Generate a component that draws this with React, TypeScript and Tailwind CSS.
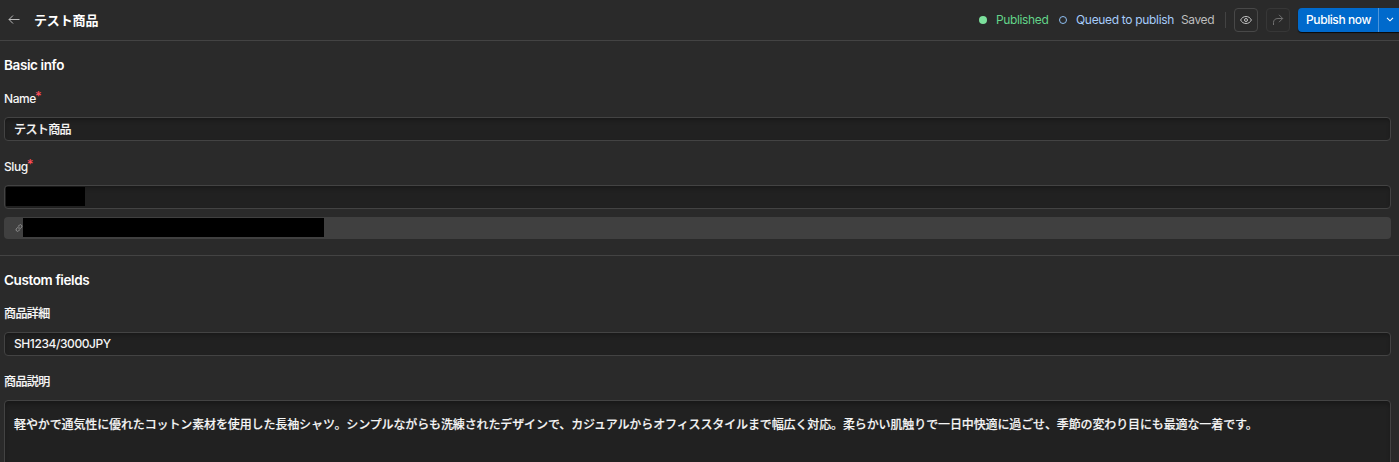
import type { ReactNode } from "react";

function Label({ children, required }: { children: ReactNode; required?: boolean }) {
  return (
    <div className="flex h-4 items-center whitespace-nowrap text-[#f5f5f5]">
      {children}
      {required && <span className="-mt-1.5 -ml-px text-[13px] text-[#ff4d58]">*</span>}
    </div>
  );
}

function Input({ children }: { children?: ReactNode }) {
  return (
    <div className="flex h-6 items-center rounded border border-[#434343] bg-[#212121] px-[9px] text-[#f5f5f5] shadow-[inset_0_3px_4px_-1px_rgba(0,0,0,0.28)]">
      {children}
    </div>
  );
}

function Header() {
  return (
    <header className="flex h-[41px] items-center border-b border-[#434343] pb-px pl-2">
      <svg width="12" height="10" viewBox="0 0 12 10" fill="none" stroke="#bdbdbd">
        <path d="M11.5 4.5H1M5 0.5L1 4.5L5 8.5" />
      </svg>
      <h1 className="ml-3.5 text-[13px] font-bold tracking-[-0.13px] text-white">テスト商品</h1>

      <div className="ml-auto flex items-center font-normal whitespace-nowrap">
        <span className="size-2 rounded-full bg-[#7ce09c]" />
        <span className="ml-[9px] w-[51px] tracking-[-0.36px] text-[#63d489]">Published</span>
        <span className="ml-3 size-2 rounded-full border border-[#8ebff2]" />
        <span className="ml-[9px] w-[97px] tracking-[-0.32px] text-[#a6ccfa]">Queued to publish</span>
        <span className="ml-2 w-[34px] tracking-[-0.4px] text-[#bdbdbd]">Saved</span>
        <span className="ml-[10px] h-4 w-px bg-[#434343]" />
        <button className="ml-2 flex size-6 items-center justify-center rounded border border-[#484848]">
          <svg width="12" height="8" viewBox="0 0 12 8" fill="none" stroke="#c4c4c4">
            <path d="M0.6 4C1.8 1.6 3.7 0.5 6 0.5S10.2 1.6 11.4 4C10.2 6.4 8.3 7.5 6 7.5S1.8 6.4 0.6 4Z" />
            <circle cx="6" cy="4" r="1.5" />
          </svg>
        </button>
        <button className="ml-2 flex size-6 items-center justify-center rounded border border-[#373737]">
          <svg width="12" height="12" viewBox="0 0 12 12" fill="none" stroke="#707070">
            <path d="M7 0.8L10.7 4.5L7 8.2M10.7 4.5H6C3 4.5 1.5 6.2 1.5 8.5V11" />
          </svg>
        </button>
        <div className="ml-2 flex h-6 rounded-l bg-[#006acc] text-white shadow-[0_1px_1px_rgba(0,0,0,0.8)]">
          <button className="w-[81px] border-r border-[#4c95dc] pl-px font-medium tracking-[-0.42px]">Publish now</button>
          <button className="flex w-5 items-center justify-center pl-px">
            <svg width="8" height="5" viewBox="0 0 8 5" fill="none" stroke="currentColor" strokeWidth="1.1">
              <path d="M1 0.8L4 3.8L7 0.8" />
            </svg>
          </button>
        </div>
      </div>
    </header>
  );
}

export default function App() {
  return (
    <div className="h-[462px] overflow-hidden bg-[#2a2a2a] font-['Inter','Noto_Sans_CJK_JP',sans-serif] text-[12px] leading-4 font-medium tracking-[-0.42px]">
      <Header />

      {/* Basic info */}
      <section className="h-[215px] border-b border-[#434343] pt-4 pr-2 pl-1">
        <h2 className="text-[13.5px] leading-4 font-semibold tracking-[-0.38px] text-white">Basic info</h2>
        <div className="mt-[18px]">
          <Label required>Name</Label>
        </div>
        <div className="mt-2.5">
          <Input>
            <span className="pt-px tracking-[-0.6px] [-webkit-text-stroke:0.15px]">テスト商品</span>
          </Input>
        </div>
        <div className="mt-[18px]">
          <Label required>Slug</Label>
        </div>
        <div className="mt-2.5 h-6 rounded border border-[#434343] bg-[#212121] pt-px pl-px shadow-[inset_0_3px_4px_-1px_rgba(0,0,0,0.28)]">
          <div className="h-[19px] w-[79px] bg-black" />
        </div>
        <div className="mt-2 flex h-[22px] items-start rounded bg-[#404040] pt-px pl-[11px]">
          <svg className="mt-1.5" width="8" height="8" viewBox="0 0 8 8" fill="none" stroke="#a0a0a0" strokeWidth="0.8">
            <path d="M3.3 2.2L4.6 0.9C5.7 0 7.7 1.7 6.8 3L5.2 4.7C4.6 5.2 3.8 5.1 3.3 4.6M4.7 5.8L3.4 7.1C2.3 8 0.3 6.3 1.2 5L2.8 3.3C3.4 2.8 4.2 2.9 4.7 3.4" />
          </svg>
          <div className="h-[19px] w-[301px] bg-black" />
        </div>
      </section>

      {/* Custom fields */}
      <section className="pt-4 pr-2 pl-1">
        <h2 className="text-[13.5px] leading-4 font-semibold tracking-[-0.38px] text-white">Custom fields</h2>
        <div className="mt-[18px] tracking-[-0.6px] [-webkit-text-stroke:0.15px]">
          <Label>商品詳細</Label>
        </div>
        <div className="mt-2.5">
          <Input>SH1234/3000JPY</Input>
        </div>
        <div className="mt-[18px] tracking-[-0.6px] [-webkit-text-stroke:0.15px]">
          <Label>商品説明</Label>
        </div>
        <div className="mt-2.5 h-24 rounded border border-[#434343] bg-[#212121] px-[9px] pt-4 tracking-[-0.12px] whitespace-nowrap text-[#f5f5f5] shadow-[inset_0_4px_5px_-1px_rgba(0,0,0,0.28)] [-webkit-text-stroke:0.15px]">
          軽やかで通気性に優れたコットン素材を使用した長袖シャツ。シンプルながらも洗練されたデザインで、カジュアルからオフィススタイルまで幅広く対応。柔らかい肌触りで一日中快適に過ごせ、季節の変わり目にも最適な一着です。
        </div>
      </section>
    </div>
  );
}
